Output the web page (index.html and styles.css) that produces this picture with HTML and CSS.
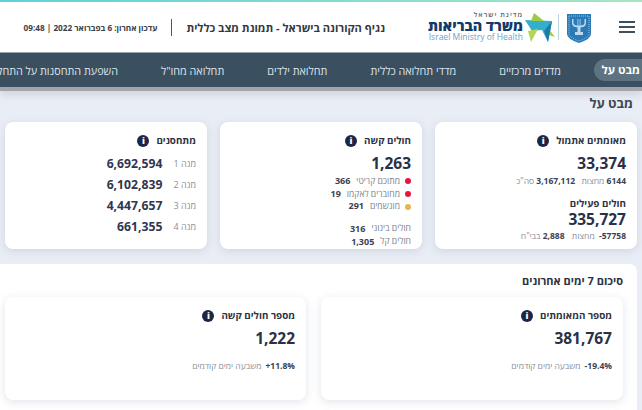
FILE: index.html
```html
<!DOCTYPE html>
<html lang="he" dir="rtl">
<head>
<meta charset="utf-8">
<title>נגיף הקורונה בישראל</title>
<link rel="stylesheet" href="styles.css">
</head>
<body>
<div class="stripe"></div>
<header class="header">
  <div class="burger"><span></span><span></span><span></span></div>
  <svg class="emblem" viewBox="0 0 24 29" width="24" height="29">
    <path d="M0 0H24V20Q24 25 12 29Q0 25 0 20Z" fill="#2a7ab8"/>
    <path d="M2 2H22V19.500Q22 23.500 12 27Q2 23.500 2 19.500Z" fill="none" stroke="#9cc6e4" stroke-width="1" stroke-dasharray="1 1"/>
    <path d="M5 5V9Q5 13 10.500 13.500V18H8V21H16V18H13.500V13.500Q19 13 19 9V5H17.500V9Q17.500 11 13.500 11.500V5H12.700V11.500H11.300V5H10.500V11.500Q6.500 11 6.500 9V5Z" fill="#bcd8ec"/>
  </svg>
  <div class="logo-rule"></div>
  <svg class="star" viewBox="0 0 30 30" width="30" height="30">
    <path d="M0 7L27 8L23 29L17 17L7 18Z" fill="#35aecb"/>
    <path d="M9 0L19 8H6Z" fill="#9ccb4a"/>
    <path d="M3 18L13 16L6 29Z" fill="#b5d556"/>
    <path d="M23 15L30 24L21 21Z" fill="#9ccb4a"/>
    <path d="M27 8L23 29L19 18Z" fill="#1f7aa3"/>
  </svg>
  <div class="logo-text">
    <div class="logo-state">מדינת ישראל</div>
    <div class="logo-name">משרד הבריאות</div>
    <div class="logo-en" dir="ltr">Israel Ministry of Health</div>
  </div>
  <h1 class="page-title">נגיף הקורונה בישראל - תמונת מצב כללית</h1>
  <div class="title-rule"></div>
  <div class="updated">עדכון אחרון: 6 בפברואר 2022 | 09:48</div>
</header>
<nav class="nav">
  <a class="tab active">מבט על</a>
  <a class="tab tab-1">מדדים מרכזיים</a>
  <a class="tab tab-2">מדדי תחלואה כללית</a>
  <a class="tab tab-3">תחלואת ילדים</a>
  <a class="tab tab-4">תחלואה מחו"ל</a>
  <a class="tab tab-5">השפעת התחסנות על התחלואה</a>
</nav>
<main class="main">
  <h2 class="overview-title">מבט על</h2>
  <section class="grid">
    <article class="card">
      <h3 class="card-title">מאומתים אתמול <i class="info">i</i></h3>
      <div class="big big-first">33,374</div>
      <div class="sub sub-first"><b>6144</b> <span class="g1">מחצות</span> <b>3,167,112</b> <span>סה"כ</span></div>
      <h3 class="card-title second">חולים פעילים</h3>
      <div class="big big-second">335,727</div>
      <div class="sub sub-second"><b>57758-</b> <span class="g2">מחצות</span> <b>2,888</b> <span>בבי"ח</span></div>
    </article>
    <article class="card">
      <h3 class="card-title">חולים קשה <i class="info">i</i></h3>
      <div class="big big-first">1,263</div>
      <ul class="dots">
        <li><i class="dot red"></i><span>מתוכם קריטי</span><b>366</b></li>
        <li><i class="dot red"></i><span>מחוברים לאקמו</span><b>19</b></li>
        <li><i class="dot amber"></i><span>מונשמים</span><b>291</b></li>
      </ul>
      <div class="plain"><span>חולים בינוני</span><b>316</b></div>
      <div class="plain"><span>חולים קל</span><b>1,305</b></div>
    </article>
    <article class="card">
      <h3 class="card-title">מתחסנים <i class="info">i</i></h3>
      <div class="dose"><span>מנה 1</span><b>6,692,594</b></div>
      <div class="dose"><span>מנה 2</span><b>6,102,839</b></div>
      <div class="dose"><span>מנה 3</span><b>4,447,657</b></div>
      <div class="dose"><span>מנה 4</span><b>661,355</b></div>
    </article>
  </section>
  <section class="summary">
    <h2 class="summary-title">סיכום 7 ימים אחרונים</h2>
    <div class="summary-row">
      <article class="card scard">
        <h3 class="card-title">מספר המאומתים <i class="info">i</i></h3>
        <div class="big big-s">381,767</div>
        <div class="change"><b>19.4%-</b><span>משבעה ימים קודמים</span></div>
      </article>
      <article class="card scard">
        <h3 class="card-title">מספר חולים קשה <i class="info">i</i></h3>
        <div class="big big-s">1,222</div>
        <div class="change"><b>11.8%+</b><span>משבעה ימים קודמים</span></div>
      </article>
    </div>
  </section>
</main>
</body>
</html>
```
FILE: styles.css
```css
* { box-sizing: border-box; }
html, body { margin: 0; padding: 0; }
body {
  width: 642px;
  height: 410px;
  overflow: hidden;
  background: #e9edf5;
  color: #222b45;
  font-family: "Open Sans", "DejaVu Sans", sans-serif;
  direction: rtl;
}
h1, h2, h3, ul { margin: 0; padding: 0; }
.stripe { height: 2px; background: linear-gradient(90deg, #5fd0dc, #a6e6c4); }
.header {
  height: 50px;
  background: #fff;
  display: flex;
  align-items: center;
  padding-right: 7px;
}
.burger { width: 16px; display: flex; flex-direction: column; gap: 3px; margin-left: 28px; }
.burger span { height: 2px; background: #3c5060; }
.emblem { margin-left: 8px; margin-top: 2px; flex: none; }
.logo-rule { width: 1px; height: 26px; background: #b9d3df; margin-left: 3px; }
.star { flex: none; margin-left: 2px; margin-top: 2px; }
.logo-text { width: 96px; text-align: right; line-height: 1; flex: none; padding-bottom: 3px; }
.logo-state { font-size: 7px; color: #5b6670; font-weight: 600; letter-spacing: 1px; margin-bottom: 1px; }
.logo-name { font-size: 14.300px; font-weight: 800; color: #123a6b; line-height: 14px; white-space: nowrap; }
.logo-en { font-size: 8.500px; color: #6fa3c4; text-align: right; white-space: nowrap; line-height: 8px; }
.page-title { font-size: 11.100px; font-weight: 700; color: #33383f; margin-right: 42px; white-space: nowrap; }
.title-rule { width: 1px; height: 17px; background: #555; margin-right: 14px; }
.updated { font-size: 8.200px; font-weight: 700; color: #3a4148; margin-right: 14px; white-space: nowrap; }
.nav {
  height: 35px;
  background: #3a4f5f;
  display: flex;
  align-items: center;
  white-space: nowrap;
  box-shadow: 0 4px 0 #a3a6a8, 0 9px 6px #d5d9e2;
  border-top: 1px solid #9aa5ad;
  overflow: hidden;
}
.tab { color: #dfe5ea; font-size: 10.800px; flex: none; }
.tab.active {
  background: #5e7382;
  color: #fff;
  font-weight: 700;
  font-size: 11.500px;
  height: 22px;
  line-height: 22px;
  padding: 0 2px 0 0;
  border-radius: 11px 0 0 11px;
  width: 48px;
}
.tab-1 { margin-right: 33px; }
.tab-2 { margin-right: 43px; }
.tab-3 { margin-right: 43px; }
.tab-4 { margin-right: 43px; }
.tab-5 { margin-right: 43px; }
.main { padding-top: 7px; }
.overview-title { font-size: 13px; font-weight: 700; color: #3d4852; padding-right: 9px; line-height: 19px; height: 19px; }
.grid {
  display: grid;
  grid-template-columns: repeat(3, 202px);
  gap: 13px;
  margin-top: 9px;
  padding-right: 5px;
}
.card {
  background: #fff;
  border-radius: 8px;
  box-shadow: 0 2px 8px rgba(120, 130, 160, .22);
  padding: 11px 11px 0 0;
  height: 127px;
}
.card-title {
  font-size: 9.800px;
  font-weight: 700;
  line-height: 15px;
  color: #2d3342;
  display: flex;
  align-items: center;
  gap: 7px;
}
.info {
  width: 12px;
  height: 12px;
  border-radius: 50%;
  background: #1d2745;
  color: #fff;
  font-size: 9px;
  font-weight: 800;
  font-style: normal;
  line-height: 12px;
  text-align: center;
}
.big { font-size: 15.500px; font-weight: 700; line-height: 22px; color: #2a3047; }
.big-first { margin-top: 4px; }
.big-second { margin-top: 1px; line-height: 16px; }
.sub { font-size: 8.500px; line-height: 12px; color: #8a8f99; white-space: nowrap; }
.sub-first { margin-top: 1px; }
.sub-second { margin-top: 3px; }
.sub b { color: #3c4252; font-weight: 700; }
.sub .g1 { margin-left: 4px; }
.sub .g2 { margin-left: 5px; margin-right: 2px; }
.card-title.second { margin-top: 11px; line-height: 12px; }
.dots { list-style: none; font-size: 8.600px; line-height: 12.700px; margin-top: 1px; }
.dots li { display: flex; align-items: center; color: #7c818c; }
.dots b, .plain b { color: #3c4252; font-weight: 700; margin-right: 6px; font-size: 9px; }
.dot { width: 6px; height: 6px; border-radius: 50%; margin-left: 5px; }
.red { background: #e5173f; }
.amber { background: #e9b44c; }
.plain { display: flex; font-size: 8.600px; line-height: 13px; color: #7c818c; }
.dots + .plain { margin-top: 9px; }
.dose { display: flex; align-items: center; height: 21px; color: #8a8f99; font-size: 9px; }
.dose b { font-size: 12.200px; font-weight: 700; color: #2f3650; margin-right: 11px; }
.card-title + .dose { margin-top: 5px; }
.summary {
  width: 637px;
  margin-top: 15px;
  margin-right: 5px;
  height: 150px;
  background: #fff;
  border-radius: 0 8px 0 0;
  padding: 9px 14px 0 0;
}
.summary-title { font-size: 11px; font-weight: 700; color: #2d3342; line-height: 16px; }
.summary-row {
  display: grid;
  grid-template-columns: 302px 301px;
  gap: 15px;
  margin-top: 8px;
}
.scard { height: 103px; padding: 11px 11px 0 0; }
.big-s { margin-top: 4px; }
.change { font-size: 8.500px; line-height: 12px; color: #8a8f99; margin-top: 11px; display: flex; gap: 4px; }
.change b { color: #3c4252; font-weight: 700; }
```
